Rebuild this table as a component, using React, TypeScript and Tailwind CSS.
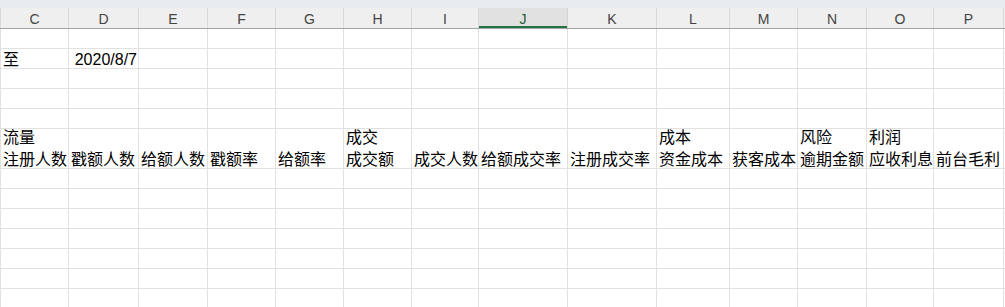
type Col = { key: string; w: string };

const cols: Col[] = [
  { key: "C", w: "w-[68px]" },
  { key: "D", w: "w-[70px]" },
  { key: "E", w: "w-[69px]" },
  { key: "F", w: "w-[68px]" },
  { key: "G", w: "w-[68px]" },
  { key: "H", w: "w-[68px]" },
  { key: "I", w: "w-[67px]" },
  { key: "J", w: "w-[89px]" },
  { key: "K", w: "w-[89px]" },
  { key: "L", w: "w-[73px]" },
  { key: "M", w: "w-[68px]" },
  { key: "N", w: "w-[69px]" },
  { key: "O", w: "w-[67px]" },
  { key: "P", w: "w-[70px]" },
];

const selectedCol = "J";

type Cell = { text: string; right?: boolean };

// sheet content keyed by row index then column letter
const data: Record<number, Record<string, Cell>> = {
  1: {
    C: { text: "至" },
    D: { text: "2020/8/7", right: true },
  },
  5: {
    C: { text: "流量\n注册人数" },
    D: { text: "戳额人数" },
    E: { text: "给额人数" },
    F: { text: "戳额率" },
    G: { text: "给额率" },
    H: { text: "成交\n成交额" },
    I: { text: "成交人数" },
    J: { text: "给额成交率" },
    K: { text: "注册成交率" },
    L: { text: "成本\n资金成本" },
    M: { text: "获客成本" },
    N: { text: "风险\n逾期金额" },
    O: { text: "利润\n应收利息" },
    P: { text: "前台毛利" },
  },
};

const rowHeights = [20, 20, 20, 20, 20, 40, 20, 20, 20, 20, 20, 20, 20];

function HeaderRow() {
  return (
    <div className="flex h-[21px] border-b border-[#a6a6a6] bg-[#efefef]">
      <div className="w-px bg-[#dadada]" />
      {cols.map((c) => {
        const sel = c.key === selectedCol;
        return (
          <div
            key={c.key}
            className={
              sel
                ? `${c.w} shrink-0 flex items-center justify-center border-r border-[#d4d4d4] bg-[#e1e1e1] text-[#1d5c36] shadow-[inset_0_-2px_0_#217346]`
                : `${c.w} shrink-0 flex items-center justify-center border-r border-[#dadada] text-[#444]`
            }
          >
            <span className="text-[14px] leading-none pt-px">{c.key}</span>
          </div>
        );
      })}
      <div className="flex-1" />
    </div>
  );
}

function Row({ idx, h }: { idx: number; h: number }) {
  const cells = data[idx] ?? {};
  return (
    <div
      className={
        h === 40
          ? "flex h-[40px] border-b border-[#e1e1e1]"
          : "flex h-[20px] border-b border-[#e1e1e1]"
      }
    >
      <div className="w-px bg-[#e1e1e1]" />
      {cols.map((c) => {
        const cell = cells[c.key];
        return (
          <div
            key={c.key}
            className={`${c.w} shrink-0 border-r border-[#e1e1e1] flex items-end overflow-hidden ${
              cell?.right ? "justify-end pr-[1px]" : "pl-[2px]"
            }`}
          >
            {cell && (
              <span className="-mb-[3px] whitespace-pre text-[16px] leading-[22px] text-black">
                {cell.text}
              </span>
            )}
          </div>
        );
      })}
      <div className="flex-1" />
    </div>
  );
}

export default function App() {
  return (
    <div
      className="w-[1005px] h-[307px] overflow-hidden bg-white"
      style={{ fontFamily: '"Liberation Sans", "Noto Sans CJK SC", sans-serif' }}
    >
      <div className="h-[8px] bg-[#e9ecef]" />
      <HeaderRow />
      {rowHeights.map((h, i) => (
        <Row key={i} idx={i} h={h} />
      ))}
    </div>
  );
}
